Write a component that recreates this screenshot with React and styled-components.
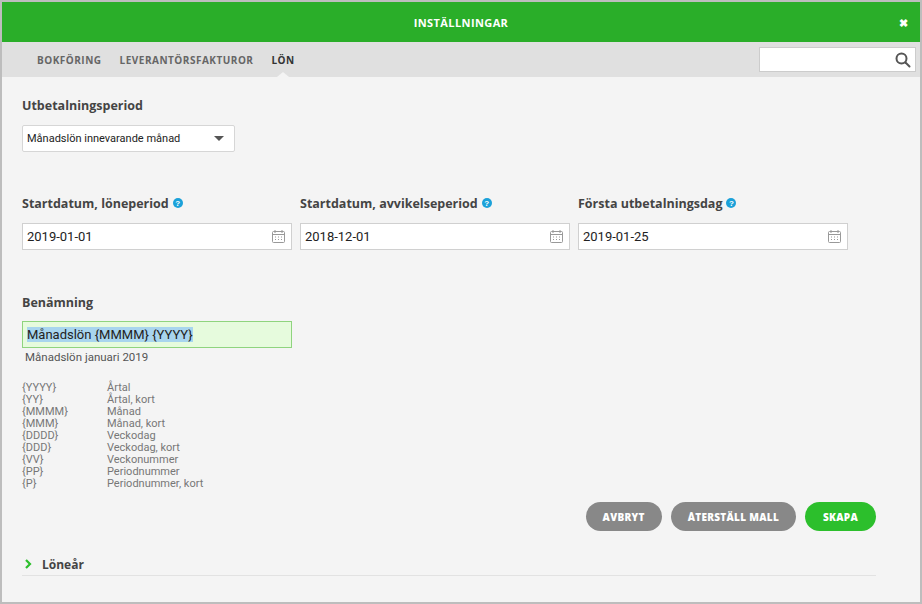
import React from 'react';
import styled, { createGlobalStyle } from 'styled-components';

const Global = createGlobalStyle`
  body { margin: 0; background: #bdbdbd; font-family: Roboto, "Liberation Sans", sans-serif; }
`;

const Modal = styled.div`
  margin: 2px;
  width: 918px;
  height: 600px;
  background: #f4f4f4;
  display: flex;
  flex-direction: column;
  overflow: hidden;
`;

const Header = styled.div`
  height: 40px;
  background: #2aae29;
  color: #fff;
  display: flex;
  align-items: center;
  justify-content: center;
  position: relative;
  font: 700 11px "Open Sans", sans-serif;
  letter-spacing: 0.4px;
`;

const Close = styled.span`
  position: absolute;
  right: 12px;
  top: 13px;
  font-size: 11px;
  font-weight: 700;
`;

const Tabs = styled.div`
  height: 35px;
  background: #e0e0e0;
  display: flex;
  align-items: center;
  padding-left: 35px;
  gap: 18px;
`;

const Tab = styled.div`
  font: 700 10px "Open Sans", sans-serif;
  letter-spacing: 0.5px;
  color: ${p => (p.$active ? '#333' : '#666')};
  height: 35px;
  display: flex;
  align-items: center;
  position: relative;
  ${p => p.$active && `
    &::after {
      content: ''; position: absolute; bottom: 0; left: 50%; margin-left: -6px;
      border: 6px solid transparent; border-bottom: 5px solid #f4f4f4; border-top: 0;
    }
  `}
`;

const Search = styled.div`
  margin-left: auto;
  margin-right: 4px;
  width: 157px;
  height: 25px;
  background: #fff;
  border: 1px solid #ccc;
  display: flex;
  align-items: center;
  justify-content: flex-end;
  padding-right: 4px;
  box-sizing: border-box;
`;

const Body = styled.div`
  padding: 0 20px 0 20px;
  display: flex;
  flex-direction: column;
`;

const Label = styled.div`
  font: 700 12.5px "Open Sans", sans-serif;
  color: #444;
  margin-top: ${p => p.$top}px;
  height: 18px;
  display: flex;
  align-items: center;
  gap: 4px;
`;

const Help = styled.span`
  width: 10px; height: 10px; border-radius: 50%;
  background: #1ba1d9; color: #fff;
  font: 700 8px "Liberation Sans", sans-serif;
  display: inline-flex; align-items: center; justify-content: center;
`;

const Select = styled.div`
  margin-top: 11px;
  width: 213px;
  height: 27px;
  background: #fff;
  border: 1px solid #d6d6d6;
  border-radius: 2px;
  box-sizing: border-box;
  display: flex;
  align-items: center;
  justify-content: space-between;
  padding: 0 10px 0 4px;
  font-size: 11px;
  color: #222;
`;

const Caret = styled.span`
  border: 5px solid transparent;
  border-top: 5px solid #555;
  border-bottom: 0;
`;

const Row = styled.div`
  display: flex;
  gap: 8px;
`;

const Col = styled.div`
  width: 270px;
  display: flex;
  flex-direction: column;
`;

const Input = styled.div`
  margin-top: ${p => p.$mt}px;
  height: 27px;
  width: 270px;
  box-sizing: border-box;
  background: ${p => (p.$green ? '#e6fbdd' : '#fff')};
  border: 1px solid ${p => (p.$green ? '#8fd47e' : '#d0d0d0')};
  display: flex;
  align-items: center;
  justify-content: space-between;
  padding: 0 5px 0 4px;
  font-size: 13px;
  color: #222;
`;

const Sel = styled.span`
  background: #a8d5ee;
`;

const Preview = styled.div`
  font-size: 11.5px;
  color: #555;
  margin: 2px 0 0 3px;
`;

const Legend = styled.div`
  margin-top: 18px;
  display: grid;
  grid-template-columns: 85px auto;
  font-size: 11px;
  line-height: 12px;
  color: #777;
`;

const Actions = styled.div`
  display: flex;
  justify-content: flex-end;
  gap: 9px;
  margin: 12px 24px 0 0;
`;

const Btn = styled.div`
  height: 29px;
  padding: 0 ${p => p.$pad}px;
  border-radius: 15px;
  background: ${p => (p.$primary ? '#2cbf2c' : '#888')};
  color: #fff;
  font: 800 10px "Open Sans", sans-serif;
  letter-spacing: 0.3px;
  display: flex;
  align-items: center;
`;

const Section = styled.div`
  margin: 22px 24px 0 0;
  border-bottom: 1px solid #e2e2e2;
  height: 22px;
  display: flex;
  align-items: center;
  gap: 10px;
  font: 700 12px "Open Sans", sans-serif;
  color: #444;
  padding-left: 2px;
`;

const Cal = () => (
  <svg width="15" height="15" viewBox="0 0 15 15" fill="none" stroke="#999">
    <rect x="1.5" y="2.5" width="12" height="11" rx="1" />
    <line x1="1.5" y1="5.5" x2="13.5" y2="5.5" />
    <path d="M4 1v3M11 1v3M4 8h1M7 8h1M10 8h1M4 10.5h1M7 10.5h1M10 10.5h1" />
  </svg>
);

const legend = [
  ['{YYYY}', 'Årtal'], ['{YY}', 'Årtal, kort'], ['{MMMM}', 'Månad'], ['{MMM}', 'Månad, kort'],
  ['{DDDD}', 'Veckodag'], ['{DDD}', 'Veckodag, kort'], ['{VV}', 'Veckonummer'],
  ['{PP}', 'Periodnummer'], ['{P}', 'Periodnummer, kort'],
];

const dates = [
  ['Startdatum, löneperiod', '2019-01-01'],
  ['Startdatum, avvikelseperiod', '2018-12-01'],
  ['Första utbetalningsdag', '2019-01-25'],
];

export default function App() {
  return (
    <>
      <Global />
      <Modal>
        <Header>
          INSTÄLLNINGAR
          <Close>✖</Close>
        </Header>
        <Tabs>
          <Tab>BOKFÖRING</Tab>
          <Tab>LEVERANTÖRSFAKTUROR</Tab>
          <Tab $active>LÖN</Tab>
          <Search>
            <svg width="16" height="16" viewBox="0 0 16 16" fill="none" stroke="#555" strokeWidth="2">
              <circle cx="6.5" cy="6.5" r="5" />
              <path d="M10.5 10.5l4 4" strokeLinecap="round" />
            </svg>
          </Search>
        </Tabs>
        <Body>
          <Label $top={19}>Utbetalningsperiod</Label>
          <Select>
            Månadslön innevarande månad
            <Caret />
          </Select>
          <Row>
            {dates.map(([l, v]) => (
              <Col key={l}>
                <Label $top={42}>{l} <Help>?</Help></Label>
                <Input $mt={11}>{v}<Cal /></Input>
              </Col>
            ))}
          </Row>
          <Label $top={43}>Benämning</Label>
          <Input $mt={10} $green>
            <Sel>Månadslön {'{MMMM}'} {'{YYYY}'}</Sel>
          </Input>
          <Preview>Månadslön januari 2019</Preview>
          <Legend>
            {legend.map(([k, v]) => (
              <React.Fragment key={k}>
                <span>{k}</span>
                <span>{v}</span>
              </React.Fragment>
            ))}
          </Legend>
          <Actions>
            <Btn $pad={17}>AVBRYT</Btn>
            <Btn $pad={17}>ÅTERSTÄLL MALL</Btn>
            <Btn $pad={18} $primary>SKAPA</Btn>
          </Actions>
          <Section>
            <svg width="8" height="10" viewBox="0 0 8 10" fill="none" stroke="#2cbf2c" strokeWidth="2.2">
              <path d="M2 1l4 4-4 4" />
            </svg>
            Löneår
          </Section>
        </Body>
      </Modal>
    </>
  );
}
